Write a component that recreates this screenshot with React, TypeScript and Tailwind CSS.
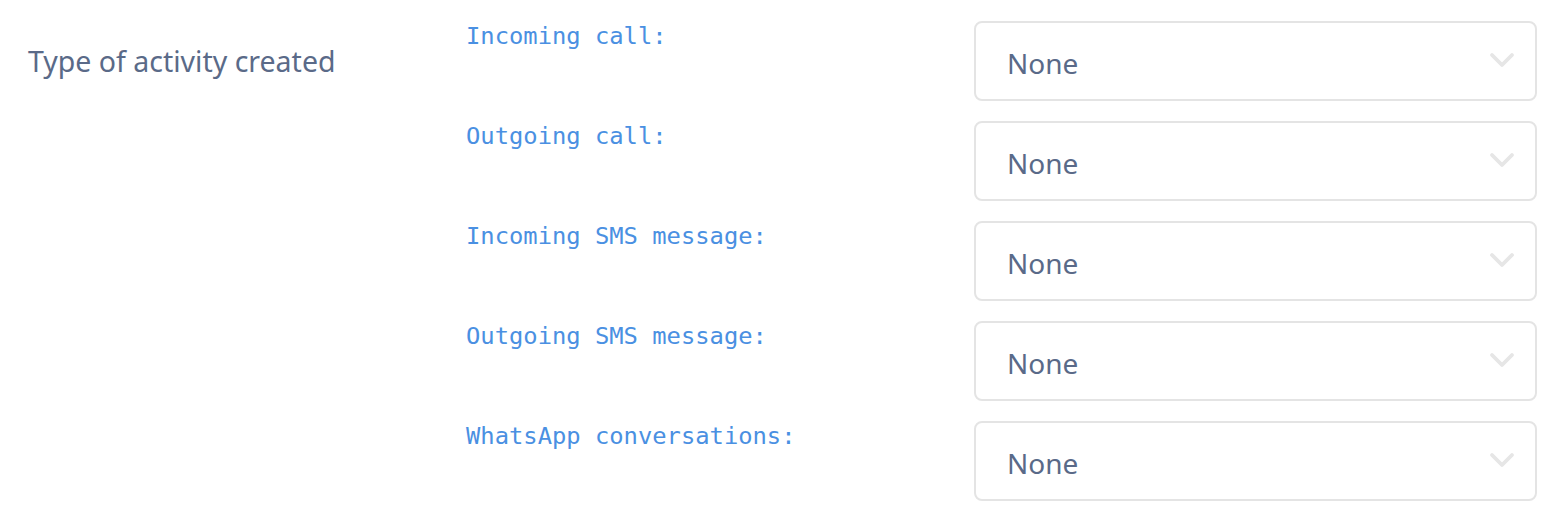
import { ChevronDown } from "lucide-react";

const rows = [
  "Incoming call:",
  "Outgoing call:",
  "Incoming SMS message:",
  "Outgoing SMS message:",
  "WhatsApp conversations:",
];

const App = () => {
  return (
    <div className="w-[1564px] h-[516px] bg-white flex pl-[28px] pr-[27px] pt-[21px]">
      <div className="w-[438px] pt-[24px]">
        <p className="text-[28.5px] leading-[32px] text-[#5a6a88] font-['Noto_Sans',sans-serif]">
          Type of activity created
        </p>
      </div>
      <div className="flex-1 flex flex-col gap-[20px]">
        {rows.map((label) => (
          <div key={label} className="flex">
            <div className="w-[508px] pt-[1px]">
              <span className="text-[23.8px] leading-[28px] text-[#4a90e2] font-['DejaVu_Sans_Mono',monospace]">
                {label}
              </span>
            </div>
            <div className="flex-1 h-[80px] border-2 border-[#e4e4e4] rounded-[8px] flex items-center justify-between pl-[31px] pr-[13px]">
              <span className="text-[28px] text-[#5a6a88] font-['Noto_Sans',sans-serif] mt-[4px]">None</span>
              <ChevronDown className="w-[40px] h-[40px] text-[#e6e6e6] -mt-[3px]" strokeWidth={2.3} />
            </div>
          </div>
        ))}
      </div>
    </div>
  );
};

export default App;
